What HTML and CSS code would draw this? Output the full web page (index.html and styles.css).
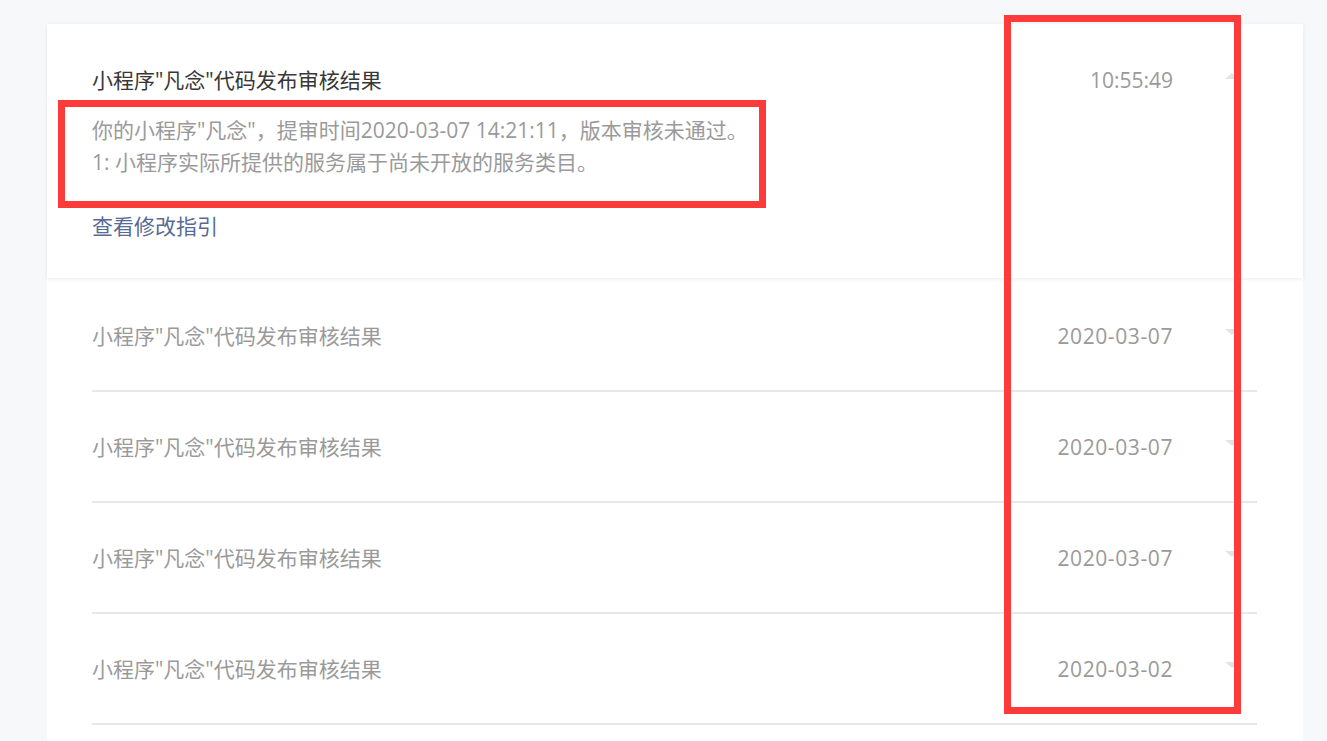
FILE: index.html
```html
<!DOCTYPE html>
<html lang="zh-CN">
<head>
<meta charset="utf-8">
<title>消息列表</title>
<link rel="stylesheet" href="styles.css">
</head>
<body>
<div class="page">
  <div class="card open">
    <div class="head">
      <div class="title dark">小程序"凡念"代码发布审核结果</div>
      <div class="meta"><span class="time">10:55:49</span><span class="caret up"></span></div>
    </div>
    <div class="desc">
      <p>你的小程序"凡念"，提审时间2020-03-07 14:21:11，版本审核未通过。</p>
      <p>1: 小程序实际所提供的服务属于尚未开放的服务类目。</p>
    </div>
    <a class="link" href="#">查看修改指引</a>
  </div>
  <div class="list">
    <div class="row">
      <div class="title">小程序"凡念"代码发布审核结果</div>
      <div class="meta"><span class="time date">2020-03-07</span><span class="caret"></span></div>
    </div>
    <div class="row">
      <div class="title">小程序"凡念"代码发布审核结果</div>
      <div class="meta"><span class="time date">2020-03-07</span><span class="caret"></span></div>
    </div>
    <div class="row">
      <div class="title">小程序"凡念"代码发布审核结果</div>
      <div class="meta"><span class="time date">2020-03-07</span><span class="caret"></span></div>
    </div>
    <div class="row">
      <div class="title">小程序"凡念"代码发布审核结果</div>
      <div class="meta"><span class="time date">2020-03-02</span><span class="caret"></span></div>
    </div>
  </div>
</div>
<div class="mark mark-desc"></div>
<div class="mark mark-time"></div>
</body>
</html>
```
FILE: styles.css
```css
html, body {
  margin: 0;
  padding: 0;
  background: #f7f8fa;
  font-family: "Open Sans", "Noto Sans CJK SC", "Microsoft YaHei", sans-serif;
  overflow: hidden;
  height: 741px;
}
.page {
  box-sizing: border-box;
  height: 741px;
  display: flex;
  flex-direction: column;
  padding: 24px 24px 0 47px;
}
.card {
  background: #fff;
  position: relative;
  z-index: 1;
  box-shadow: 0 1px 4px rgba(0, 0, 0, 0.08);
  padding: 40px 46px 36px 45px;
}
.head, .row {
  display: flex;
  align-items: center;
  justify-content: space-between;
}
.title {
  font-size: 21px;
  line-height: 32px;
  color: #9a9a9a;
}
.title.dark {
  color: #383838;
}
.meta {
  display: flex;
  align-items: center;
}
.time {
  font-size: 21px;
  line-height: 32px;
  color: #9a9a9a;
}
.time.date {
  letter-spacing: 0.6px;
}
.caret {
  width: 0;
  height: 0;
  border-left: 7px solid transparent;
  border-right: 7px solid transparent;
  border-top: 6px solid #e4e4e8;
  margin-left: 52px;
  margin-right: 18px;
  margin-bottom: 8px;
}
.caret.up {
  border-top: 0;
  border-bottom: 6px solid #e4e4e8;
}
.desc {
  margin-top: 18px;
  font-size: 21px;
  line-height: 32px;
  color: #9a9a9a;
}
.desc p {
  margin: 0;
}
.link {
  display: block;
  margin-top: 32px;
  font-size: 21px;
  line-height: 32px;
  color: #576b95;
  text-decoration: none;
}
.list {
  flex: 1;
  min-height: 0;
  overflow: hidden;
  background: #fff;
  padding: 3px 46px 0 45px;
}
.row {
  height: 109px;
  border-bottom: 2px solid #e8e8ec;
}
.mark {
  position: absolute;
  border: 7px solid #fe3b3b;
  box-sizing: border-box;
  z-index: 5;
}
.mark-desc {
  left: 58px;
  top: 100px;
  width: 708px;
  height: 108px;
}
.mark-time {
  left: 1004px;
  top: 15px;
  width: 237px;
  height: 699px;
}
```
